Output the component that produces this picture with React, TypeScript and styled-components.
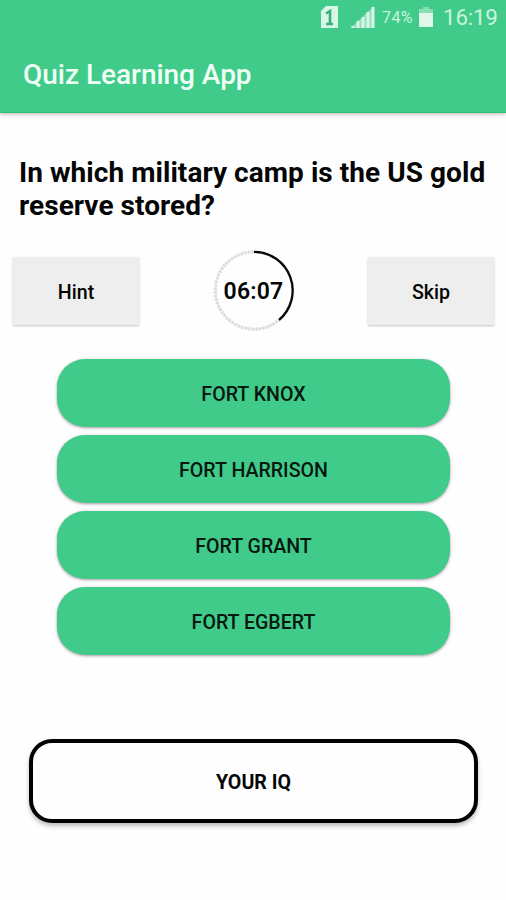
import React from "react";
import styled, { createGlobalStyle } from "styled-components";

const GlobalStyle = createGlobalStyle`
  *, *::before, *::after { box-sizing: border-box; }
  body {
    margin: 0;
    background: #fefefe;
    font-family: Roboto, "Liberation Sans", sans-serif;
    color: #050505;
  }
  button { font-family: inherit; color: inherit; border: 0; padding: 0; margin: 0; }
  h1, h2 { margin: 0; }
`;

const Screen = styled.main`
  width: 506px;
  height: 900px;
  overflow: hidden;
  display: flex;
  flex-direction: column;
`;

const Header = styled.header`
  flex: none;
  height: 113px;
  background: #41cb8a;
  border-bottom: 1px solid #2cc07b;
  box-shadow: 0 1px 4px rgba(60, 30, 45, 0.35);
`;

const StatusBar = styled.div`
  height: 36px;
  display: flex;
  justify-content: flex-end;
  padding-right: 9px;
  color: #c9f3dc;
`;

const StatusIcons = styled.svg`
  display: block;
  width: 56px;
  height: 36px;
  margin-right: 6px;
`;

const BatteryIcon = styled.svg`
  display: block;
  width: 16px;
  height: 36px;
  margin: 0 9px 0 5px;
`;

const Percent = styled.span`
  width: 31px;
  font-size: 16px;
  line-height: 36px;
  white-space: nowrap;
  letter-spacing: 0.4px;
`;

const Clock = styled.span`
  width: 54px;
  font-size: 22.4px;
  line-height: 34px;
  letter-spacing: -0.2px;
  white-space: nowrap;
`;

const Title = styled.h1`
  padding-left: 23px;
  font-size: 28px;
  font-weight: 500;
  line-height: 78px;
  letter-spacing: -0.03px;
  color: #effff6;
  white-space: nowrap;
`;

const Question = styled.h2`
  margin: 43px 0 0 19px;
  font-size: 28px;
  font-weight: 700;
  line-height: 33px;
  letter-spacing: 0.05px;
  white-space: nowrap;
`;

const Controls = styled.div`
  margin-top: 28px;
  padding: 0 12px 0 13px;
  height: 82px;
  display: flex;
  justify-content: space-between;
`;

const FlatButton = styled.button`
  width: 126px;
  height: 68px;
  margin-top: 7px;
  padding-top: 2px;
  background: #eeeeee;
  box-shadow: 0 1px 2px rgba(0, 0, 0, 0.24);
  font-size: 19.6px;
  font-weight: 500;
`;

const Timer = styled.div`
  width: 82px;
  height: 82px;
  display: grid;
  place-items: center;
  > * { grid-area: 1 / 1; }
`;

const TimerText = styled.span`
  padding-top: 2px;
  font-size: 23px;
  font-weight: 600;
  line-height: 24px;
  letter-spacing: 0.2px;
`;

const Answers = styled.div`
  margin: 27px 56px 0 57px;
  display: grid;
  gap: 8px;
`;

const Answer = styled.button`
  height: 68px;
  padding-top: 2px;
  border-radius: 28px;
  background: #41cb8a;
  box-shadow: 0 1px 3px rgba(50, 20, 35, 0.42);
  font-size: 19.6px;
  font-weight: 500;
  color: #06180f;
`;

const IqButton = styled.button`
  flex: none;
  height: 84px;
  margin: 84px 28px 0 29px;
  && { border: 4px solid #020202; padding-top: 2px; }
  border-radius: 23px;
  background: #fefefe;
  box-shadow: 0 3px 4px rgba(0, 0, 0, 0.25);
  font-size: 19.6px;
  font-weight: 700;
`;

const answers = ["FORT KNOX", "FORT HARRISON", "FORT GRANT", "FORT EGBERT"];

export default function App() {
  return (
    <Screen>
      <GlobalStyle />
      <Header>
        <StatusBar>
          <StatusIcons viewBox="0 0 56 36" aria-hidden="true">
            <path d="M6 6H18V28H1V11Z" fill="#d8f5e5" />
            <path d="M6 13.5L10 11V24M6 24H13" fill="none" stroke="#35b178" strokeWidth="2.6" />
            <path d="M31 28L54 6V28Z" fill="#92e3bb" />
            <path d="M33 26V28M38 21V28M43 17V28M48 12V28M53 7V28" stroke="#d8f5e5" strokeWidth="3" />
          </StatusIcons>
          <Percent>74%</Percent>
          <BatteryIcon viewBox="0 0 16 36" aria-hidden="true">
            <path d="M5 7H11V9H15V13H1V9H5Z" fill="#87deb4" />
            <path d="M1 13H15V27H1Z" fill="#e0f8ea" />
          </BatteryIcon>
          <Clock>16:19</Clock>
        </StatusBar>
        <Title>Quiz Learning App</Title>
      </Header>
      <Question>
        In which military camp is the US gold
        <br />
        reserve stored?
      </Question>
      <Controls>
        <FlatButton>Hint</FlatButton>
        <Timer>
          <svg width="82" height="82" viewBox="0 0 82 82" aria-hidden="true">
            <circle cx="41" cy="40.5" r="38.7" fill="none" stroke="#ececec" strokeWidth="3" />
            <circle cx="41" cy="40.5" r="38.7" fill="none" stroke="#d4d4d4" strokeWidth="3" strokeDasharray="1.2 2.4" />
            <path d="M41 1.8A38.7 38.7 0 0 1 66 70" fill="none" stroke="#fefefe" strokeWidth="4" />
            <path d="M41 1.8A38.7 38.7 0 0 1 66 70" fill="none" stroke="#080808" strokeWidth="2.3" />
          </svg>
          <TimerText>06:07</TimerText>
        </Timer>
        <FlatButton>Skip</FlatButton>
      </Controls>
      <Answers>
        {answers.map((label) => (
          <Answer key={label}>{label}</Answer>
        ))}
      </Answers>
      <IqButton>YOUR IQ</IqButton>
    </Screen>
  );
}
